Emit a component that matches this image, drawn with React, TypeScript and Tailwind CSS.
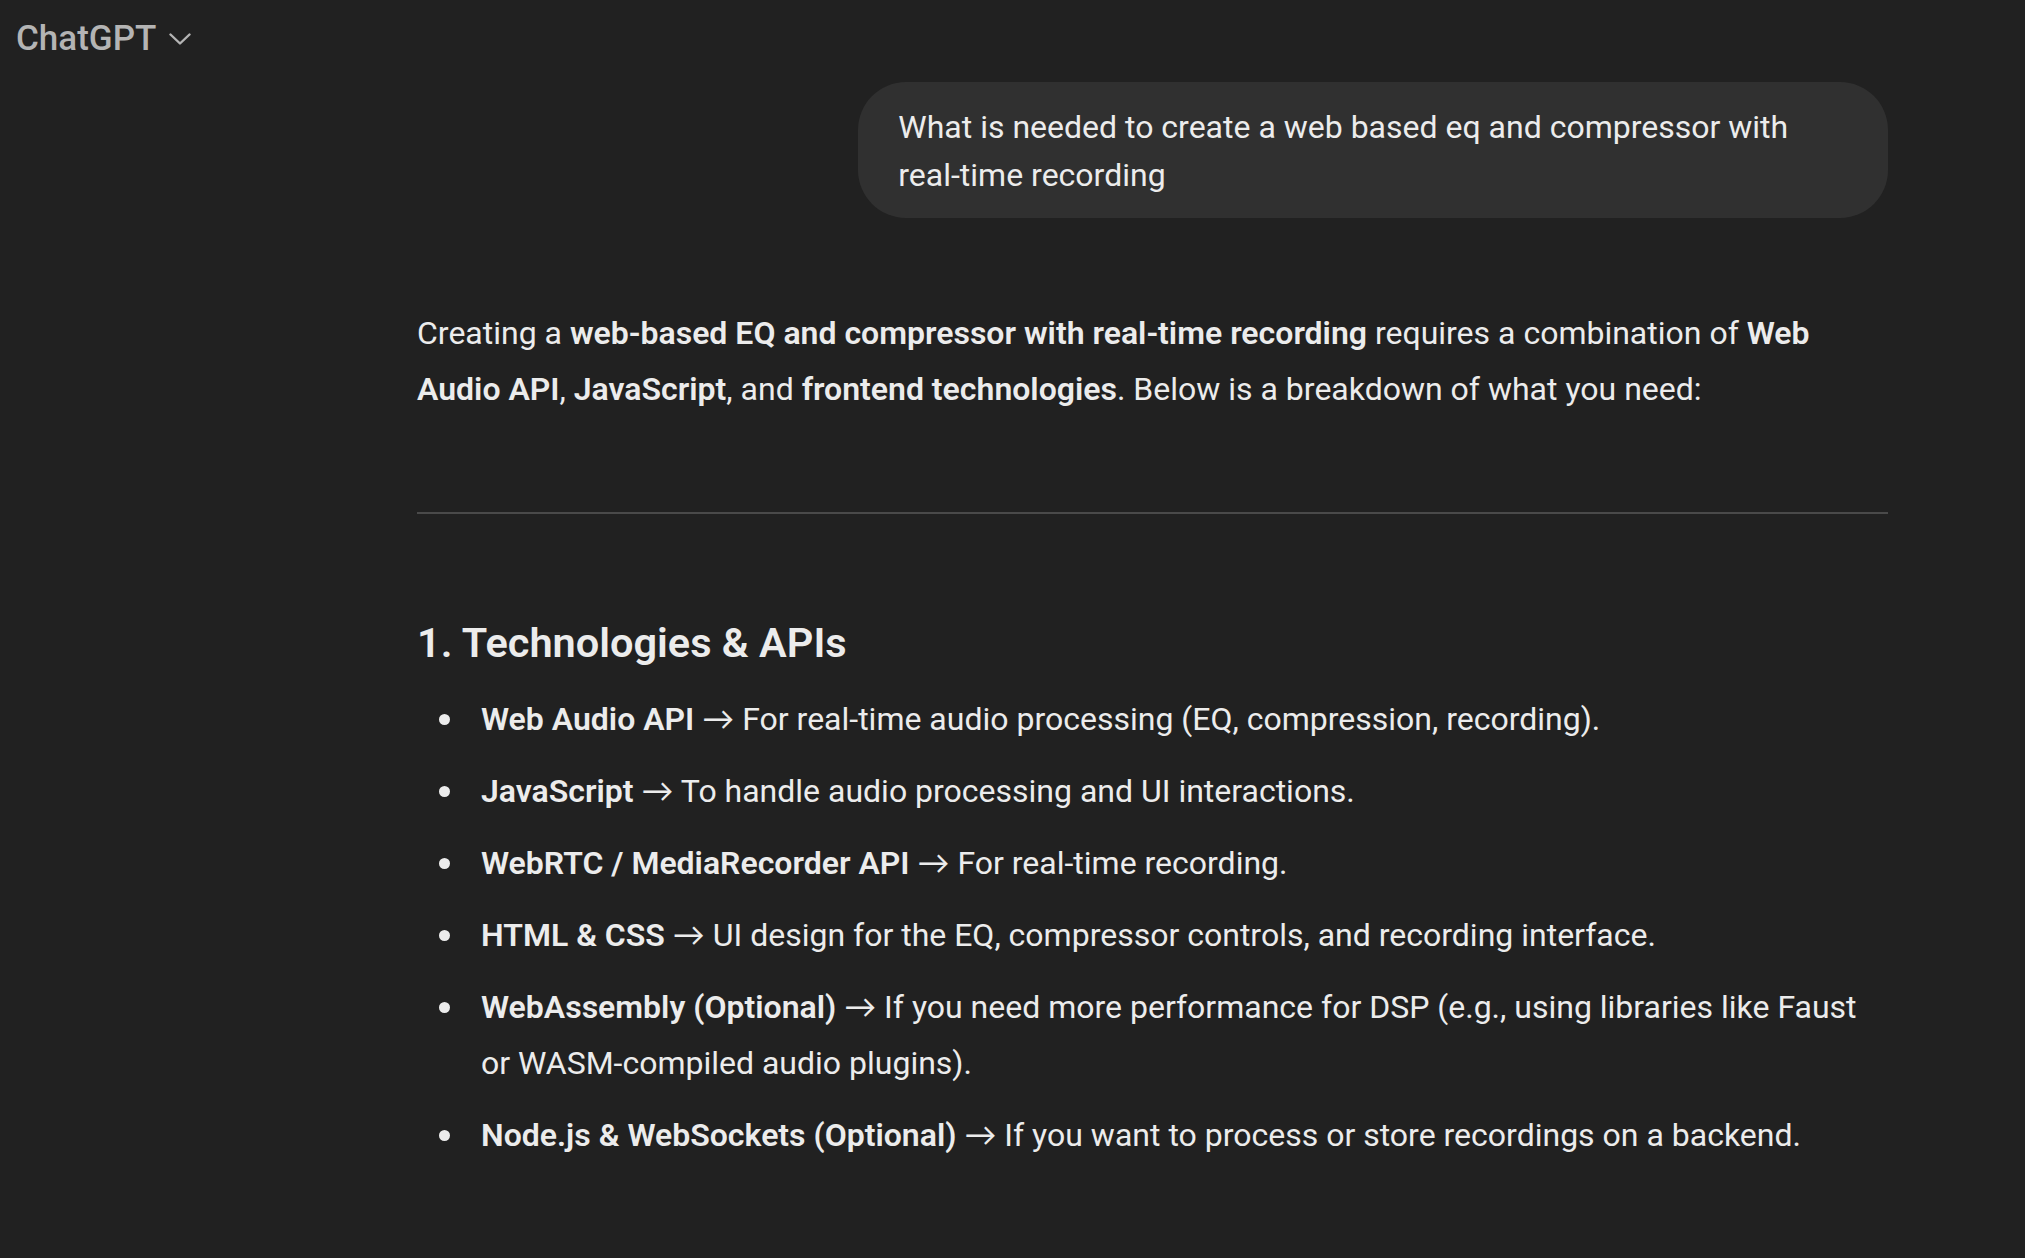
const items = [
  { title: "Web Audio API", text: "For real-time audio processing (EQ, compression, recording)." },
  { title: "JavaScript", text: "To handle audio processing and UI interactions." },
  { title: "WebRTC / MediaRecorder API", text: "For real-time recording." },
  { title: "HTML & CSS", text: "UI design for the EQ, compressor controls, and recording interface." },
  {
    title: "WebAssembly (Optional)",
    text: "If you need more performance for DSP (e.g., using libraries like Faust or WASM-compiled audio plugins).",
  },
  { title: "Node.js & WebSockets (Optional)", text: "If you want to process or store recordings on a backend." },
];

export default function App() {
  return (
    <div className="min-h-screen bg-[#212121] text-[#ececec] font-['Roboto',sans-serif] overflow-hidden">
      {/* header */}
      <div className="h-[76px] flex items-center pl-4 gap-[13px]">
        <span className="text-[35px] font-medium text-[#b4b4b4] leading-none">ChatGPT</span>
        <svg width="22" height="12" viewBox="0 0 22 12" fill="none" className="mt-[2px]">
          <path d="M1.5 1.5 11 10.5 20.5 1.5" stroke="#b4b4b4" strokeWidth="2.4" strokeLinecap="round" strokeLinejoin="round" />
        </svg>
      </div>

      <div className="ml-[417px] w-[1471px] flex flex-col">
        {/* user message */}
        <div className="mt-[6px] flex justify-end">
          <div className="max-w-[70%] bg-[#303030] rounded-[48px] px-10 pt-[21px] pb-[19px] text-[32px] leading-[48px]">
            What is needed to create a web based eq and compressor with real-time recording
          </div>
        </div>

        {/* assistant message */}
        <p className="mt-[87px] pr-4 text-[32px] leading-[56px]">
          Creating a <strong className="font-semibold">web-based EQ and compressor with real-time recording</strong> requires a
          combination of <strong className="font-semibold">Web Audio API</strong>,{" "}
          <strong className="font-semibold">JavaScript</strong>, and{" "}
          <strong className="font-semibold">frontend technologies</strong>. Below is a breakdown of what you need:
        </p>

        <div className="mt-[95px] h-[2px] bg-[#4a4a4a]" />

        <h3 className="mt-[97px] text-[41.5px] leading-[64px] font-semibold">1. Technologies &amp; APIs</h3>

        <ul className="mt-2 flex flex-col">
          {items.map((item) => (
            <li key={item.title} className="flex my-2 text-[32px] leading-[56px]">
              <div className="w-[64px] h-[56px] shrink-0 flex items-center">
                <span className="ml-[22px] w-[11px] h-[11px] rounded-full bg-[#ececec]" />
              </div>
              <div className="pr-6">
                <strong className="font-semibold">{item.title}</strong>{" "}
                <span className="font-['Lato',sans-serif] leading-none">→</span> {item.text}
              </div>
            </li>
          ))}
        </ul>
      </div>
    </div>
  );
}
